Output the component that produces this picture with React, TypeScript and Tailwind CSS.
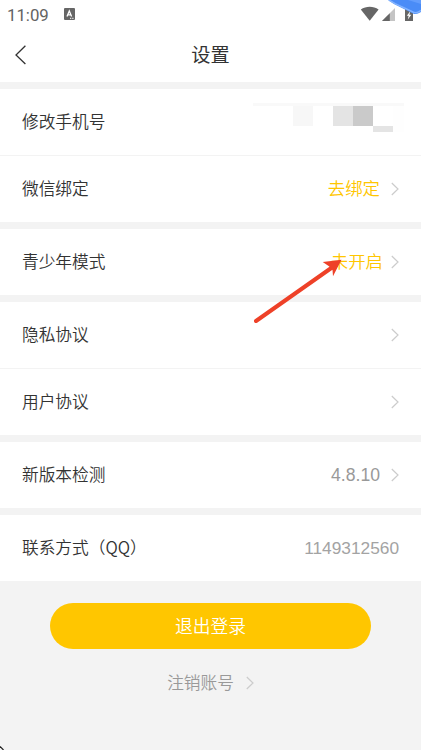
import React from "react";

interface SettingItem {
  label: string;
  value?: string;
  valueClass?: string;
  arrow?: boolean;
  masked?: boolean;
}

const groups: SettingItem[][] = [
  [
    { label: "修改手机号", masked: true },
    {
      label: "微信绑定",
      value: "去绑定",
      valueClass: "text-[17.4px] text-[#ffc600] mr-[11px] pt-px",
      arrow: true,
    },
  ],
  [
    {
      label: "青少年模式",
      value: "未开启",
      valueClass: "text-[17.4px] text-[#ffc600] mr-[8px] pt-px",
      arrow: true,
    },
  ],
  [
    { label: "隐私协议", arrow: true },
    { label: "用户协议", arrow: true },
  ],
  [
    {
      label: "新版本检测",
      value: "4.8.10",
      valueClass: "text-[17.6px] text-[#999999] mr-[11px]",
      arrow: true,
    },
  ],
  [
    {
      label: "联系方式（QQ）",
      value: "1149312560",
      valueClass: "text-[17.3px] text-[#a3a3a3] pt-px",
    },
  ],
];

const ArrowRight: React.FC = () => (
  <svg width="8" height="14" viewBox="0 0 8 14" fill="none" className="shrink-0">
    <path d="M0.8 1L7 7L0.8 13" stroke="#cccccc" strokeWidth="1.2" />
  </svg>
);

// Mosaic over the phone number
const MaskedPhone: React.FC = () => (
  <svg
    width="151"
    height="29"
    viewBox="0 0 151 29"
    shapeRendering="crispEdges"
    className="-mr-[5px] mb-[9px] shrink-0"
  >
    <rect width="151" height="3" fill="#f9f9f9" />
    <rect x="40" y="3" width="20" height="20" fill="#f7f7f7" />
    <rect x="80" y="3" width="20" height="20" fill="#e4e4e4" />
    <rect x="100" y="3" width="20" height="20" fill="#cacaca" />
    <rect x="120" y="23" width="20" height="6" fill="#e4e4e4" />
    <rect x="140" y="3" width="11" height="26" fill="#fefefe" />
  </svg>
);

const StatusBar: React.FC = () => (
  <div className="relative flex h-7 items-center pl-[7px]">
    <span className="pt-px font-['Roboto'] text-[16.8px] leading-7 font-normal text-[#636363]">
      11:09
    </span>
    <svg width="11" height="12" viewBox="0 0 11 12" className="ml-[15px]">
      <rect width="11" height="12" rx="1" fill="#666666" />
      <path d="M3 8.5L5.3 3L7.6 8.5M3.8 6.8H6.8" stroke="#fff" strokeWidth="1.3" fill="none" />
      <path d="M6 10.3H7.3M8.2 10.3H9.5" stroke="#fff" strokeWidth="1" />
    </svg>
    <svg width="61" height="24" viewBox="0 0 61 24" className="absolute top-0 right-0">
      <path d="M0.8 9.5C6 5.7 13.4 5.7 18.6 9.5L9.7 20.7Z" fill="#666666" />
      <path d="M35 8V21H22Z" fill="#c4c4c4" />
      <path d="M29.8 13.2V21H22Z" fill="#666666" />
      <path d="M45 9H53V21H45Z" fill="#666666" />
      <path d="M50.5 11L46.8 15.8H48.7L47.8 19.5L51.3 14.7H49.3Z" fill="#fff" />
      <path d="M28 0H61V12L58.5 13.3Q56 14.6 53 13.5L34 4Z" fill="#4a8cf7" />
      <path d="M29 0L35 3.6L53.5 12.3Q56 13.3 58.5 11.8L61 10.5" stroke="#82b3ff" strokeWidth="1.5" fill="none" />
      <path d="M48 0L61 4V0Z" fill="#639dfc" />
    </svg>
  </div>
);

const SettingRow: React.FC<{ item: SettingItem }> = ({ item }) => (
  <div className="flex h-[66px] items-center justify-between pr-[22px] pl-[22px]">
    <span className="font-['Noto_Sans_CJK_SC',sans-serif] text-[16.7px] text-[#333333]">
      {item.label}
    </span>
    <div className="flex items-center">
      {item.masked && <MaskedPhone />}
      {item.value && <span className={item.valueClass}>{item.value}</span>}
      {item.arrow && <ArrowRight />}
    </div>
  </div>
);

const App: React.FC = () => {
  return (
    <div className="relative h-[750px] w-[421px] overflow-hidden bg-[#f3f3f3] font-['Liberation_Sans','Noto_Sans_CJK_SC',sans-serif] font-[350]">
      <header className="h-[82px] bg-white">
        <StatusBar />
        <div className="relative flex h-[54px] items-center justify-center">
          <svg
            width="12"
            height="20"
            viewBox="0 0 12 20"
            fill="none"
            className="absolute top-[17px] left-[15px]"
          >
            <path d="M10.4 0.8L1 10L10.4 19" stroke="#333333" strokeWidth="1.3" />
          </svg>
          <h1 className="pt-[2px] text-[19.2px] font-normal text-[#333333]">设置</h1>
        </div>
      </header>

      <main>
        {groups.map((group, index) => (
          <section key={index} className="mt-[7px] divide-y divide-[#f3f3f3] bg-white">
            {group.map((item) => (
              <div key={item.label}>
                <SettingRow item={item} />
              </div>
            ))}
          </section>
        ))}
      </main>

      <div className="mt-[22px] flex flex-col items-center">
        <button className="h-[46px] w-[321px] rounded-full bg-[#ffc600] pt-[2px] text-[17.8px] text-white">
          退出登录
        </button>
        <button className="mt-[20px] flex items-center text-[16.7px] text-[#999999]">
          <span className="mr-3 pt-[2px]">注销账号</span>
          <ArrowRight />
        </button>
      </div>

      {/* Pointer arrow */}
      <svg
        width="96"
        height="70"
        viewBox="0 0 96 70"
        className="pointer-events-none absolute top-[256px] left-[250px]"
      >
        <path d="M6 65L82 11.5" stroke="#ee4128" strokeWidth="4" strokeLinecap="round" />
        <path d="M91.5 3.8L72.7 6L79 10.3L82.5 14L83 20.3Z" fill="#ee4128" />
      </svg>

      <svg width="4" height="4" viewBox="0 0 4 4" className="absolute bottom-0 left-0">
        <path d="M0 0.5L3.5 4" stroke="#222222" strokeWidth="1.2" />
      </svg>
    </div>
  );
};

export default App;
